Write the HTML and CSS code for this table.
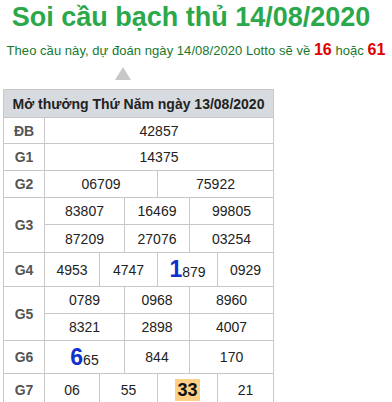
FILE: index.html
```html
<!DOCTYPE html>
<html>
<head>
<meta charset="utf-8">
<link rel="stylesheet" href="styles.css">
</head>
<body>
<h1 class="title">Soi cầu bạch thủ 14/08/2020</h1>
<p class="sub">Theo cầu này, dự đoán ngày 14/08/2020 Lotto sẽ về <b class="red">16</b> hoặc <b class="red">61</b></p>
<div class="arrow"></div>
<table class="kq">
  <colgroup>
    <col class="c0"><col class="c1"><col class="c2"><col class="c3"><col class="c4"><col class="c5"><col class="c6">
  </colgroup>
  <tr class="hd"><th colspan="7">Mở thưởng Thứ Năm ngày 13/08/2020</th></tr>
  <tr class="r26"><td class="lb">ĐB</td><td colspan="6">42857</td></tr>
  <tr class="r27"><td class="lb">G1</td><td colspan="6">14375</td></tr>
  <tr class="r27"><td class="lb">G2</td><td colspan="3">06709</td><td colspan="3">75922</td></tr>
  <tr class="r27"><td class="lb" rowspan="2">G3</td><td colspan="2">83807</td><td colspan="2">16469</td><td colspan="2">99805</td></tr>
  <tr class="r28"><td colspan="2">87209</td><td colspan="2">27076</td><td colspan="2">03254</td></tr>
  <tr class="r34"><td class="lb">G4</td><td>4953</td><td colspan="2">4747</td><td colspan="2"><span class="big">1</span>879</td><td>0929</td></tr>
  <tr class="r27"><td class="lb" rowspan="2">G5</td><td colspan="2">0789</td><td colspan="2">0968</td><td colspan="2">8960</td></tr>
  <tr class="r27"><td colspan="2">8321</td><td colspan="2">2898</td><td colspan="2">4007</td></tr>
  <tr class="r33"><td class="lb">G6</td><td colspan="2"><span class="big">6</span>65</td><td colspan="2">844</td><td colspan="2">170</td></tr>
  <tr class="r33"><td class="lb">G7</td><td>06</td><td colspan="2">55</td><td colspan="2"><span class="hl">33</span></td><td>21</td></tr>
</table>
</body>
</html>
```

FILE: styles.css
```css
html, body {
  margin: 0;
  padding: 0;
  background: #fff;
}
body {
  font-family: "Liberation Sans", Arial, sans-serif;
  width: 392px;
}
.title {
  margin: 0;
  padding-top: 1px;
  font-size: 27px;
  line-height: 33px;
  font-weight: bold;
  color: #2aa84a;
  text-align: center;
  white-space: nowrap;
  padding-right: 10px;
}
.sub {
  margin: 6px 0 0 0;
  font-size: 13px;
  line-height: 20px;
  color: #18782a;
  text-align: center;
  white-space: nowrap;
  letter-spacing: 0.05px;
}
.red {
  color: #e00000;
  font-size: 16px;
}
.arrow {
  width: 0;
  height: 0;
  margin: 6px 0 0 115px;
  border-left: 8px solid transparent;
  border-right: 8px solid transparent;
  border-bottom: 13px solid #c8c8c8;
}
.kq {
  margin: 9px 0 0 3px;
  border-collapse: collapse;
  table-layout: fixed;
  width: 271px;
  font-size: 14px;
  color: #222;
}
.c0 { width: 41px; }
.c1 { width: 55px; }
.c2 { width: 25px; }
.c3 { width: 33px; }
.c4 { width: 32px; }
.c5 { width: 28px; }
.c6 { width: 56px; }
.kq th, .kq td {
  border: 1px solid #c8c8c8;
  text-align: center;
  padding: 0;
}
.kq th {
  background: #d7dadf;
  font-weight: bold;
  color: #222;
  height: 27px;
  white-space: nowrap;
}
.lb {
  font-weight: bold;
  color: #555;
}
.r26 td { height: 25px; }
.r27 td { height: 26px; }
.r28 td { height: 27px; }
.r33 td { height: 32px; }
.r34 td { height: 33px; }
.big {
  color: #1030d0;
  font-weight: bold;
  font-size: 23px;
}
.hl {
  display: inline-block;
  background: #fcd085;
  color: #111;
  font-weight: bold;
  font-size: 18px;
  line-height: 22px;
  padding: 0 2px;
}
```
